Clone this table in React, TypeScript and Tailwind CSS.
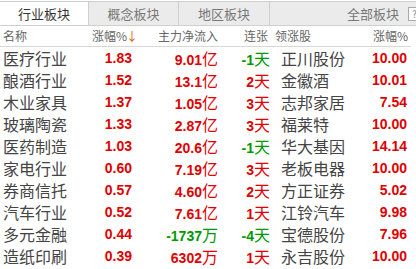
const rows = [
    { name: "医疗行业", pct: "1.83", flow: "9.01", unit: "亿", days: "-1", stock: "正川股份", spct: "10.00" },
    { name: "酿酒行业", pct: "1.52", flow: "13.1", unit: "亿", days: "2", stock: "金徽酒", spct: "10.01" },
    { name: "木业家具", pct: "1.37", flow: "1.05", unit: "亿", days: "3", stock: "志邦家居", spct: "7.54" },
    { name: "玻璃陶瓷", pct: "1.33", flow: "2.87", unit: "亿", days: "3", stock: "福莱特", spct: "10.00" },
    { name: "医药制造", pct: "1.03", flow: "20.6", unit: "亿", days: "-1", stock: "华大基因", spct: "14.14" },
    { name: "家电行业", pct: "0.60", flow: "7.19", unit: "亿", days: "3", stock: "老板电器", spct: "10.00" },
    { name: "券商信托", pct: "0.57", flow: "4.60", unit: "亿", days: "2", stock: "方正证券", spct: "5.02" },
    { name: "汽车行业", pct: "0.52", flow: "7.61", unit: "亿", days: "1", stock: "江铃汽车", spct: "9.98" },
    { name: "多元金融", pct: "0.44", flow: "-1737", unit: "万", days: "-4", stock: "宝德股份", spct: "7.96" },
    { name: "造纸印刷", pct: "0.39", flow: "6302", unit: "万", days: "1", stock: "永吉股份", spct: "10.00" },
];

const cjk = "font-['Noto_Sans_CJK_SC',sans-serif]";
const num = "font-['Liberation_Sans','Noto_Sans_CJK_SC',sans-serif] font-bold text-[14px]";

const tone = (v: string) => (v.startsWith("-") ? "text-[#009a00]" : "text-[#e00000]");

export default function App() {
    return (
        <div className={`w-[416px] h-[269px] bg-white overflow-hidden ${cjk}`}>
            <div className="flex h-[25px] mt-[1px] border-t border-b border-[#cfcfcf] bg-[#ebebeb] text-[13px] leading-none">
                <div className="w-[89px] flex items-center justify-center bg-white text-[#333] border-r border-[#cfcfcf]">行业板块</div>
                <div className="w-[90px] flex items-center justify-center text-[#777] border-r border-[#cfcfcf]">概念板块</div>
                <div className="w-[91px] flex items-center justify-center text-[#777] border-r border-[#cfcfcf]">地区板块</div>
                <div className="flex-1 flex items-center justify-end text-[#777]">
                    <span>全部板块</span>
                    <span className="ml-[9px] -mr-[5px] w-[13px] h-[14px] shrink-0 border border-[#aaa] text-[10px] flex items-center justify-center text-[#888] bg-white">?</span>
                </div>
            </div>

            <div className="flex items-center h-[21px] border-b border-[#d8d8d8] w-[411px] text-[12px] text-[#666] leading-none whitespace-nowrap">
                <div className="w-[80px] pl-[3px]">名称</div>
                <div className="w-[52px] pl-[12px] flex items-center">
                    <span>涨幅%</span>
                    <span className="text-[#e05a00] text-[12px] -ml-[1px]">↓</span>
                </div>
                <div className="w-[86px] text-right">主力净流入</div>
                <div className="w-[50px] text-right">连张</div>
                <div className="w-[57px] pl-[7px]">领涨股</div>
                <div className="w-[83px] text-right">涨幅%</div>
            </div>

            {rows.map((r) => (
                <div key={r.name} className="flex items-center h-[22px] leading-none whitespace-nowrap">
                    <div className="w-[80px] pl-[3px] text-[16px] text-[#444]">{r.name}</div>
                    <div className={`w-[52px] text-right ${num} text-[#e00000]`}>{r.pct}</div>
                    <div className={`w-[86px] text-right ${tone(r.flow)}`}>
                        <span className={num}>{r.flow}</span>
                        <span className="text-[16px]">{r.unit}</span>
                    </div>
                    <div className={`w-[52px] text-right ${tone(r.days)}`}>
                        <span className={num}>{r.days}</span>
                        <span className="text-[16px]">天</span>
                    </div>
                    <div className="w-[78px] pl-[11px] text-[16px] text-[#444]">{r.stock}</div>
                    <div className={`w-[59px] text-right ${num} text-[#e00000]`}>{r.spct}</div>
                </div>
            ))}
        </div>
    );
}
